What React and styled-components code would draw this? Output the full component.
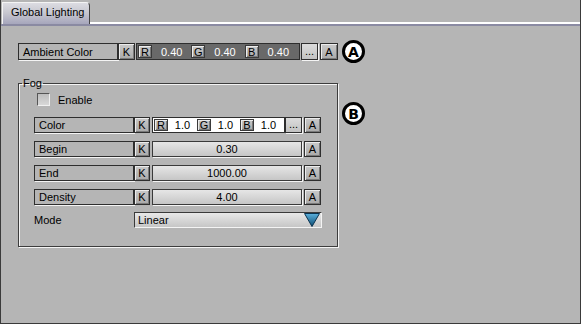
import React from "react";
import styled, { createGlobalStyle } from "styled-components";

const GlobalStyle = createGlobalStyle`
  body {
    margin: 0;
    font-family: "Liberation Sans", Arial, sans-serif;
    font-size: 11px;
  }
`

const Window = styled.div`
  width: 581px;
  height: 324px;
  box-sizing: border-box;
  background: #b5b5b5;
  border: 1px solid #3a3a3a;
  border-top: none;
  display: flex;
  flex-direction: column;
`
const TabStrip = styled.div`
  display: flex;
  align-items: flex-end;
  height: 26px;
  box-sizing: border-box;
  padding-left: 1px;
  border-bottom: 2px solid #8a8aa2;
`
const Tab = styled.div`
  width: 88px;
  height: 22px;
  box-sizing: border-box;
  padding: 3px 0 0 8px;
  background: linear-gradient(#dcdce2, #c8c8d0 45%, #a6a6bc);
  border-left: 1px solid #f4f4f4;
  border-top: 1px solid #f4f4f4;
  border-right: 1px solid #444;
  border-top-right-radius: 4px;
  color: #000;
`
const TabFiller = styled.div`
  flex: 1;
  border-bottom: 2px solid #fff;
`
const Content = styled.div`
  padding: 17px 0 0 17px;
  display: flex;
  flex-direction: column;
`
const Row = styled.div`
  display: flex;
  align-items: center;
  height: ${p => p.$h || 16}px;
  margin-top: ${p => p.$mt || 0}px;
`
const Label = styled.div`
  width: ${p => p.$w}px;
  height: 100%;
  box-sizing: border-box;
  border: 1px solid #2e2e2e;
  box-shadow: 1px 1px 0 #f4f4f4;
  padding-left: 4px;
  display: flex;
  align-items: center;
  color: #000;
`
const Btn = styled.div`
  width: ${p => p.$w || 16}px;
  height: 100%;
  box-sizing: border-box;
  margin-left: ${p => p.$ml || 0}px;
  border: 1px solid #2e2e2e;
  background: linear-gradient(#cacaca, #a9a9a9);
  box-shadow: inset 1px 1px 0 #ececec, inset -1px -1px 0 #7a7a7a;
  display: flex;
  align-items: center;
  justify-content: center;
  color: #000;
  flex-shrink: 0;
`
const Dots = styled(Btn)`
  background: linear-gradient(#dcdcdc, #c2c2c2);
  box-shadow: 1px 1px 0 #f4f4f4;
  align-items: flex-end;
  padding-bottom: 2px;
`
const ColorGroup = styled.div`
  width: ${p => p.$w}px;
  height: 100%;
  box-sizing: border-box;
  margin-left: ${p => p.$ml || 0}px;
  display: flex;
  align-items: stretch;
  padding: 1px;
  border: 1px solid #2e2e2e;
  background: ${p => (p.$light ? "#fff" : "#696969")};
  color: ${p => (p.$light ? "#000" : "#fff")};
`
const ChannelBtn = styled(Btn)`
  height: auto;
  width: 14px;
  border-color: #3a3a3a;
`
const ChannelValue = styled.div`
  flex: 1;
  display: flex;
  align-items: center;
  justify-content: center;
`
const Field = styled.div`
  width: ${p => p.$w}px;
  height: 100%;
  box-sizing: border-box;
  margin-left: 2px;
  border: 1px solid #3a3a3a;
  box-shadow: 1px 1px 0 #f4f4f4;
  background: linear-gradient(#e6e6e6, #c6c6c6);
  display: flex;
  align-items: center;
  justify-content: center;
  color: #000;
`
const Marker = styled.div`
  width: 23px;
  height: 23px;
  box-sizing: border-box;
  border-radius: 50%;
  border: 3px solid #000;
  background: #fff;
  margin-left: ${p => p.$ml || 0}px;
  margin-top: ${p => p.$mt || 0}px;
  display: flex;
  align-items: center;
  justify-content: center;
  font-family: "DejaVu Sans", sans-serif;
  font-weight: bold;
  font-size: 14px;
  color: #000;
  flex-shrink: 0;
`
const FogSection = styled.div`
  display: flex;
  align-items: flex-start;
  margin-top: 17px;
`
const Group = styled.fieldset`
  width: 320px;
  height: 170px;
  box-sizing: border-box;
  margin: 0;
  padding: 0 0 0 15px;
  border: 1px solid #3c3c3c;
  box-shadow: 1px 1px 0 #f4f4f4, inset 1px 1px 0 #f4f4f4;
`
const Legend = styled.legend`
  padding: 0 1px;
  margin-left: -12px;
  line-height: 13px;
  color: #000;
`
const CheckRow = styled.label`
  display: flex;
  align-items: center;
  gap: 8px;
  margin: 3px 0 0 3px;
  height: 13px;
  color: #000;
`
const CheckBox = styled.span`
  width: 13px;
  height: 13px;
  box-sizing: border-box;
  border: 1px solid #555;
  border-right-color: #f0f0f0;
  border-bottom-color: #f0f0f0;
  background: linear-gradient(#bdbdbd, #d8d8d8);
`
const ModeText = styled.div`
  width: 100px;
  color: #000;
`
const Select = styled.div`
  width: 188px;
  height: 100%;
  box-sizing: border-box;
  border: 1px solid #3a3a3a;
  border-right-color: #f4f4f4;
  border-bottom-color: #f4f4f4;
  background: linear-gradient(#e8e8e8, #c6c6c6);
  display: flex;
  align-items: center;
  justify-content: space-between;
  padding: 0 1px 0 3px;
  color: #000;
`

function Arrow() {
  return (
    <svg width="16" height="14" viewBox="0 0 16 14">
      <defs>
        <linearGradient id="ag" x1="0" y1="0" x2="0" y2="1">
          <stop offset="0" stopColor="#5cb0dc" />
          <stop offset="1" stopColor="#0b4d74" />
        </linearGradient>
      </defs>
      <path d="M0.5 0.5 L15.5 0.5 L8 13.5 Z" fill="url(#ag)" stroke="#0a3350" />
    </svg>
  )
}

function Channels({ values }) {
  const names = ["R", "G", "B"]
  return names.map((n, i) => (
    <React.Fragment key={n}>
      <ChannelBtn>{n}</ChannelBtn>
      <ChannelValue>{values[i]}</ChannelValue>
    </React.Fragment>
  ))
}

function ValueRow({ label, value, mt }) {
  return (
    <Row $mt={mt}>
      <Label $w={100}>{label}</Label>
      <Btn>K</Btn>
      <Field $w={150}>{value}</Field>
      <Btn $w={17} $ml={2}>A</Btn>
    </Row>
  )
}

function App() {
  return (
    <Window>
      <GlobalStyle />
      <TabStrip>
        <Tab>Global Lighting</Tab>
        <TabFiller />
      </TabStrip>
      <Content>
        <Row $h={17}>
          <Label $w={100}>Ambient Color</Label>
          <Btn $w={17}>K</Btn>
          <ColorGroup $w={164} $ml={1}>
            <Channels values={["0.40", "0.40", "0.40"]} />
          </ColorGroup>
          <Dots $w={17} $ml={1}>...</Dots>
          <Btn $w={18} $ml={2}>A</Btn>
          <Marker $ml={4}>A</Marker>
        </Row>
        <FogSection>
          <Group>
            <Legend>Fog</Legend>
            <CheckRow>
              <CheckBox />
              Enable
            </CheckRow>
            <Row $mt={11}>
              <Label $w={100}>Color</Label>
              <Btn>K</Btn>
              <ColorGroup $w={133} $ml={2} $light>
                <Channels values={["1.0", "1.0", "1.0"]} />
              </ColorGroup>
              <Dots $w={17}>...</Dots>
              <Btn $w={17} $ml={2}>A</Btn>
            </Row>
            <ValueRow label="Begin" value="0.30" mt={8} />
            <ValueRow label="End" value="1000.00" mt={8} />
            <ValueRow label="Density" value="4.00" mt={8} />
            <Row $mt={7}>
              <ModeText>Mode</ModeText>
              <Select>
                Linear
                <Arrow />
              </Select>
            </Row>
          </Group>
          <Marker $ml={4} $mt={25}>B</Marker>
        </FogSection>
      </Content>
    </Window>
  )
}

export default App
